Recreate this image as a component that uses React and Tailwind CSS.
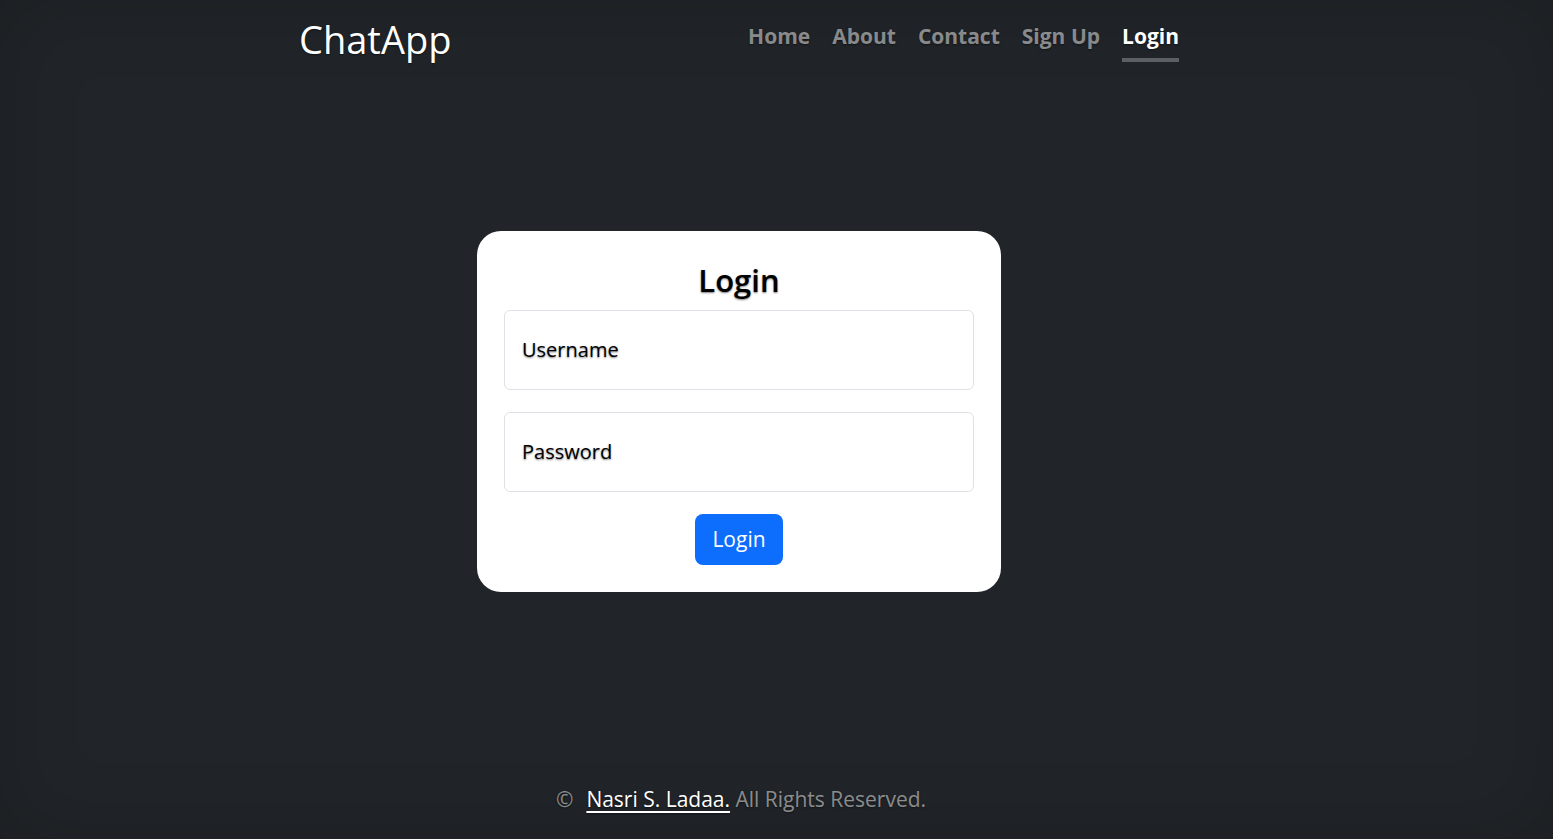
const navItems = ['Home', 'About', 'Contact', 'Sign Up', 'Login']

const shadow = '[text-shadow:0_1px_2px_rgba(0,0,0,0.5)]'

const App = () => {
  return (
    <div
      className={`flex h-[839px] flex-col bg-[#212529] pr-[75px] font-['Open_Sans',sans-serif] text-white shadow-[inset_0_0_5rem_rgba(0,0,0,0.18)] ${shadow}`}
    >
      <header className="mx-auto flex w-[880px] items-start justify-between pt-[14px]">
        <div className="text-[38px] leading-[50px] font-medium">ChatApp</div>
        <nav className="flex gap-[22px] pt-[6px]">
          {navItems.map((item) => (
            <a
              key={item}
              className={`border-b-4 pb-[6px] text-[21px] leading-[32px] font-bold ${
                item === 'Login'
                  ? 'border-[#5c5f63] text-white'
                  : 'border-transparent text-white/50'
              }`}
            >
              {item}
            </a>
          ))}
        </nav>
      </header>

      <main className="flex flex-1 items-start justify-center pt-[167px]">
        <div className="w-[524px] rounded-[24px] bg-white px-[27px] pt-[27px] pb-[27px] text-black">
          <h2 className="text-center text-[31px] leading-[44px] font-semibold">Login</h2>
          <form
            className="mt-[8px] flex flex-col gap-[22px]"
            onSubmit={(e) => e.preventDefault()}
          >
            {['Username', 'Password'].map((label) => (
              <div
                key={label}
                className="flex h-[80px] items-center rounded-[6px] border border-[#dee2e6] px-[17px]"
              >
                <span className="text-[20px]">{label}</span>
              </div>
            ))}
            <div className="flex justify-center">
              <button className="h-[51px] rounded-[8px] bg-[#0d6efd] px-[17px] text-[21px] text-white">
                Login
              </button>
            </div>
          </form>
        </div>
      </main>

      <footer className="pb-[24px] pl-[4px] text-center text-[21px] text-white/50">
        <span className="mr-[13px]">©</span>
        <a className="text-white underline underline-offset-[4px]">Nasri S. Ladaa.</a> All Rights Reserved.
      </footer>
    </div>
  )
}

export default App
